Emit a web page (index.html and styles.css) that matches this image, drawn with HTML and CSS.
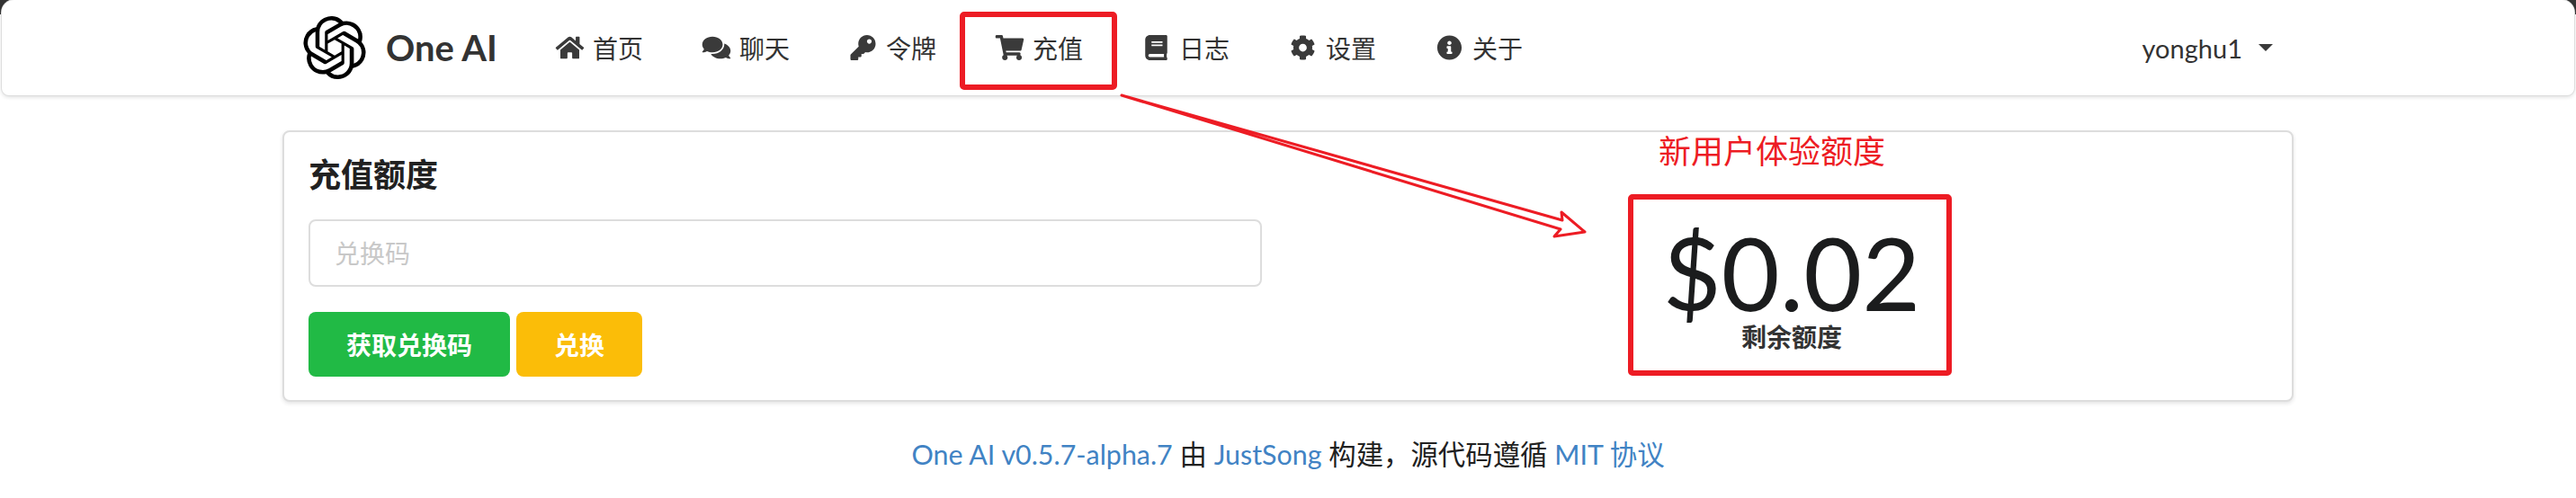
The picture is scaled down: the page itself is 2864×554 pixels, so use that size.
FILE: index.html
```html
<!DOCTYPE html>
<html lang="zh-CN">
<head>
<meta charset="utf-8">
<title>One AI</title>
<link rel="stylesheet" href="styles.css">
</head>
<body>
<header class="navbar">
  <a class="brand">
    <svg class="logo" viewBox="0 0 24 24"><path d="M22.2819 9.8211a5.9847 5.9847 0 0 0-.5157-4.9108 6.0462 6.0462 0 0 0-6.5098-2.9A6.0651 6.0651 0 0 0 4.9807 4.1818a5.9847 5.9847 0 0 0-3.9977 2.9 6.0462 6.0462 0 0 0 .7427 7.0966 5.98 5.98 0 0 0 .511 4.9107 6.051 6.051 0 0 0 6.5146 2.9001A5.9847 5.9847 0 0 0 13.2599 24a6.0557 6.0557 0 0 0 5.7718-4.2058 5.9894 5.9894 0 0 0 3.9977-2.9001 6.0557 6.0557 0 0 0-.7475-7.0729zm-9.022 12.6081a4.4755 4.4755 0 0 1-2.8764-1.0408l.1419-.0804 4.7783-2.7582a.7948.7948 0 0 0 .3927-.6813v-6.7369l2.02 1.1686a.071.071 0 0 1 .038.052v5.5826a4.504 4.504 0 0 1-4.4945 4.4944zm-9.6607-4.1254a4.4708 4.4708 0 0 1-.5346-3.0137l.142.0852 4.783 2.7582a.7712.7712 0 0 0 .7806 0l5.8428-3.3685v2.3324a.0804.0804 0 0 1-.0332.0615L9.74 19.9502a4.4992 4.4992 0 0 1-6.1408-1.6464zM2.3408 7.8956a4.485 4.485 0 0 1 2.3655-1.9728V11.6a.7664.7664 0 0 0 .3879.6765l5.8144 3.3543-2.0201 1.1685a.0757.0757 0 0 1-.071 0l-4.8303-2.7865A4.504 4.504 0 0 1 2.3408 7.872zm16.5963 3.8558L13.1038 8.364 15.1192 7.2a.0757.0757 0 0 1 .071 0l4.8303 2.7913a4.4944 4.4944 0 0 1-.6765 8.1042v-5.6772a.79.79 0 0 0-.407-.667zm2.0107-3.0231l-.142-.0852-4.7735-2.7818a.7759.7759 0 0 0-.7854 0L9.409 9.2297V6.8974a.0662.0662 0 0 1 .0284-.0615l4.8303-2.7866a4.4992 4.4992 0 0 1 6.6802 4.66zM8.3065 12.863l-2.02-1.1638a.0804.0804 0 0 1-.038-.0567V6.0742a4.4992 4.4992 0 0 1 7.3757-3.4537l-.142.0805L8.704 5.459a.7948.7948 0 0 0-.3927.6813zm1.0976-2.3654l2.602-1.4998 2.6069 1.4998v2.9994l-2.5974 1.4997-2.6067-1.4997Z"/></svg>
    <span class="brand-name">One AI</span>
  </a>
  <nav class="menu">
    <a class="item"><svg class="icon" viewBox="0 0 576 512"><path d="M280.37 148.26L96 300.11V464a16 16 0 0 0 16 16l112.06-.29a16 16 0 0 0 15.92-16V368a16 16 0 0 1 16-16h64a16 16 0 0 1 16 16v95.64a16 16 0 0 0 16 16.05L464 480a16 16 0 0 0 16-16V300L295.67 148.26a12.19 12.19 0 0 0-15.3 0zM571.6 251.47L488 182.56V44.05a12 12 0 0 0-12-12h-56a12 12 0 0 0-12 12v72.61L318.47 43a48 48 0 0 0-61 0L4.34 251.47a12 12 0 0 0-1.6 16.9l25.5 31A12 12 0 0 0 45.15 301l235.22-193.74a12.19 12.19 0 0 1 15.3 0L530.9 301a12 12 0 0 0 16.9-1.6l25.5-31a12 12 0 0 0-1.7-16.93z"/></svg>首页</a>
    <a class="item"><svg class="icon" viewBox="0 0 576 512"><path d="M416 192c0-88.4-93.1-160-208-160S0 103.6 0 192c0 34.3 14.1 65.9 38 92-13.4 30.2-35.5 54.2-35.8 54.5-2.2 2.3-2.8 5.7-1.5 8.7S4.8 352 8 352c36.6 0 66.9-12.3 88.7-25 32.2 15.7 70.3 25 111.3 25 114.9 0 208-71.6 208-160zm122 220c23.9-26 38-57.7 38-92 0-66.9-53.5-124.2-129.3-148.1.9 6.6 1.3 13.3 1.3 20.1 0 105.9-107.7 192-240 192-10.8 0-21.3-.8-31.7-1.9C207.8 439.6 281.8 480 368 480c41 0 79.1-9.2 111.3-25 21.8 12.7 52.1 25 88.7 25 3.2 0 6.1-1.9 7.3-4.8 1.3-2.9.7-6.3-1.5-8.7-.3-.3-22.4-24.2-35.8-54.5z"/></svg>聊天</a>
    <a class="item"><svg class="icon" viewBox="0 0 512 512"><path d="M512 176.001C512 273.203 433.202 352 336 352c-11.22 0-22.19-1.062-32.827-3.069l-24.012 27.014A23.999 23.999 0 0 1 261.223 384H224v40c0 13.255-10.745 24-24 24h-40v40c0 13.255-10.745 24-24 24H24c-13.255 0-24-10.745-24-24v-78.059c0-6.365 2.529-12.47 7.029-16.971l161.802-161.802C163.108 213.814 160 195.271 160 176 160 78.798 238.797.001 335.999 0 433.488-.001 512 78.511 512 176.001zM336 128c0 26.51 21.49 48 48 48s48-21.49 48-48-21.49-48-48-48-48 21.49-48 48z"/></svg>令牌</a>
    <a class="item"><svg class="icon" viewBox="0 0 576 512"><path d="M528.12 301.319l47.273-208C578.806 78.301 567.391 64 551.99 64H159.208l-9.166-44.81C147.758 8.021 137.93 0 126.529 0H24C10.745 0 0 10.745 0 24v16c0 13.255 10.745 24 24 24h69.883l70.248 343.435C147.325 417.1 136 435.222 136 456c0 30.928 25.072 56 56 56s56-25.072 56-56c0-15.674-6.447-29.835-16.824-40h209.647C430.447 426.165 424 440.326 424 456c0 30.928 25.072 56 56 56s56-25.072 56-56c0-22.172-12.888-41.332-31.579-50.405l5.517-24.276c3.413-15.018-8.002-29.319-23.403-29.319H218.117l-6.545-32h293.145c11.206 0 20.92-7.754 23.403-18.681z"/></svg>充值</a>
    <a class="item"><svg class="icon" viewBox="0 0 448 512"><path d="M448 360V24c0-13.3-10.7-24-24-24H96C43 0 0 43 0 96v320c0 53 43 96 96 96h328c13.3 0 24-10.7 24-24v-16c0-7.5-3.5-14.3-8.9-18.7-4.2-15.4-4.2-59.3 0-74.7 5.4-4.3 8.9-11.1 8.9-18.6zM128 134c0-3.3 2.7-6 6-6h212c3.3 0 6 2.7 6 6v20c0 3.3-2.7 6-6 6H134c-3.3 0-6-2.7-6-6v-20zm0 64c0-3.3 2.7-6 6-6h212c3.3 0 6 2.7 6 6v20c0 3.3-2.7 6-6 6H134c-3.3 0-6-2.7-6-6v-20zm253.4 250H96c-17.7 0-32-14.3-32-32 0-17.6 14.4-32 32-32h285.4c-1.9 17.1-1.9 46.9 0 64z"/></svg>日志</a>
    <a class="item"><svg class="icon" viewBox="0 0 512 512"><path d="M487.4 315.7l-42.6-24.6c4.3-23.2 4.3-47 0-70.2l42.6-24.6c4.9-2.8 7.1-8.6 5.5-14-11.1-35.6-30-67.8-54.7-94.6-3.8-4.1-10-5.1-14.8-2.3L380.8 110c-17.9-15.4-38.5-27.3-60.8-35.1V25.8c0-5.6-3.9-10.5-9.4-11.7-36.7-8.2-74.3-7.8-109.2 0-5.5 1.2-9.4 6.1-9.4 11.7V75c-22.2 7.9-42.8 19.8-60.8 35.1L88.7 85.5c-4.9-2.8-11-1.9-14.8 2.3-24.7 26.7-43.6 58.9-54.7 94.6-1.7 5.4.6 11.2 5.5 14L67.3 221c-4.3 23.2-4.3 47 0 70.2l-42.6 24.6c-4.9 2.8-7.1 8.6-5.5 14 11.1 35.6 30 67.8 54.7 94.6 3.8 4.1 10 5.1 14.8 2.3l42.6-24.6c17.9 15.4 38.5 27.3 60.8 35.1v49.2c0 5.6 3.9 10.5 9.4 11.7 36.7 8.2 74.3 7.8 109.2 0 5.5-1.2 9.4-6.1 9.4-11.7v-49.2c22.2-7.9 42.8-19.8 60.8-35.1l42.6 24.6c4.9 2.8 11 1.9 14.8-2.3 24.7-26.7 43.6-58.9 54.7-94.6 1.5-5.5-.7-11.3-5.6-14.1zM256 336c-44.1 0-80-35.9-80-80s35.9-80 80-80 80 35.9 80 80-35.9 80-80 80z"/></svg>设置</a>
    <a class="item"><svg class="icon" viewBox="0 0 512 512"><path d="M256 8C119.043 8 8 119.083 8 256c0 136.997 111.043 248 248 248s248-111.003 248-248C504 119.083 392.957 8 256 8zm0 110c23.196 0 42 18.804 42 42s-18.804 42-42 42-42-18.804-42-42 18.804-42 42-42zm56 254c0 6.627-5.373 12-12 12h-88c-6.627 0-12-5.373-12-12v-24c0-6.627 5.373-12 12-12h12v-64h-12c-6.627 0-12-5.373-12-12v-24c0-6.627 5.373-12 12-12h64c6.627 0 12 5.373 12 12v100h12c6.627 0 12 5.373 12 12v24z"/></svg>关于</a>
  </nav>
  <div class="user">yonghu1<span class="caret"></span></div>
</header>
<main class="card">
  <div class="col">
    <h2 class="title">充值额度</h2>
    <input class="code" type="text" placeholder="兑换码">
    <div class="actions">
      <button class="btn green">获取兑换码</button>
      <button class="btn yellow">兑换</button>
    </div>
  </div>
  <div class="col stat">
    <div class="value">$0.02</div>
    <div class="label">剩余额度</div>
  </div>
</main>
<footer class="foot"><a>One AI v0.5.7-alpha.7</a> 由 <a>JustSong</a> 构建，源代码遵循 <a>MIT 协议</a></footer>
<svg class="marks" viewBox="0 0 2864 554" width="2864" height="554">
  <rect class="mark" x="1070" y="16" width="169" height="81" rx="2"/>
  <rect class="mark" x="1813" y="219" width="354" height="196" rx="2"/>
  <path class="arrow" d="M1247 106L1737 245L1736 236L1762 258L1728 263L1735 255Z"/>
</svg>
<div class="note">新用户体验额度</div>
</body>
</html>
```
FILE: styles.css
```css
* { box-sizing: border-box; }
html, body { margin: 0; padding: 0; background: #fff; }
body {
  position: relative;
  width: 2864px;
  height: 554px;
  overflow: hidden;
  font-family: Lato, "Noto Sans CJK SC", sans-serif;
  font-size: 28px;
  color: #212121;
}
body::before {
  content: "";
  position: absolute;
  left: 0;
  top: 0;
  width: 100%;
  height: 16px;
  background: #333;
}
a { color: inherit; text-decoration: none; }

.navbar {
  position: relative;
  display: flex;
  align-items: center;
  height: 106px;
  margin: 0 2px;
  padding: 0 0 0 335px;
  background: #fff;
  border-radius: 14px 14px 8px 8px;
  box-shadow: 0 0 0 1px #ddd, 0 2px 4px rgba(34,36,38,.16);
}
.brand { display: flex; align-items: center; gap: 22px; width: 247px; }
.logo { width: 70px; height: 70px; fill: #000; flex: none; }
.brand-name { font-size: 40px; font-weight: 700; color: #333; line-height: 1; }
.menu { display: flex; }
.item {
  display: flex;
  align-items: center;
  padding: 0 32px 0 33px;
  font-size: 28px;
  color: #333;
  white-space: nowrap;
}
.icon { width: 33px; height: 28px; margin-right: 9px; fill: #3a3a3a; flex: none; }
.user {
  display: flex;
  align-items: center;
  margin-left: auto;
  margin-right: 335px;
  font-size: 29px;
  color: #333;
}
.caret {
  margin-left: 18px;
  width: 0;
  height: 0;
  border-left: 8px solid transparent;
  border-right: 8px solid transparent;
  border-top: 8px solid #3a3a3a;
}

.card {
  display: grid;
  grid-template-columns: 1060px 1fr;
  column-gap: 60px;
  margin: 39px 0 0 314px;
  width: 2236px;
  height: 302px;
  padding: 25px 27px 0;
  background: #fff;
  border: 2px solid #ddd;
  border-radius: 8px;
  box-shadow: 0 2px 4px rgba(34,36,38,.12);
}
.title { margin: 0; font-size: 36px; font-weight: 700; line-height: 44px; color: #212121; }
.code {
  display: block;
  width: 100%;
  height: 75px;
  margin-top: 28px;
  padding: 0 27px;
  border: 2px solid #ddd;
  border-radius: 8px;
  font: inherit;
  outline: none;
  color: #212121;
}
.code::placeholder { color: #c8c8c8; opacity: 1; }
.actions { display: flex; gap: 7px; margin-top: 28px; }
.btn {
  height: 72px;
  border: 0;
  border-radius: 8px;
  font: inherit;
  font-weight: 700;
  color: #fff;
}
.green { width: 224px; background: #21ba45; }
.yellow { width: 140px; background: #fbbd08; }

.stat { display: flex; flex-direction: column; align-items: center; padding-top: 75px; }
.value { font-size: 112px; line-height: 112px; color: #1b1c1d; }
.label { margin-top: -1px; font-size: 28px; font-weight: 700; line-height: 34px; color: #333; }

.foot { margin-top: 38px; text-align: center; font-size: 30.4px; line-height: 40px; }
.foot a { color: #4183c4; }

.marks { position: absolute; left: 0; top: 0; pointer-events: none; }
.mark { fill: none; stroke: #ed1c24; stroke-width: 6; }
.arrow { fill: #fff; stroke: #ed1c24; stroke-width: 3; stroke-linejoin: round; }
.note {
  position: absolute;
  left: 1844px;
  top: 144px;
  font-size: 36px;
  line-height: 48px;
  color: #ed1c24;
}
```
